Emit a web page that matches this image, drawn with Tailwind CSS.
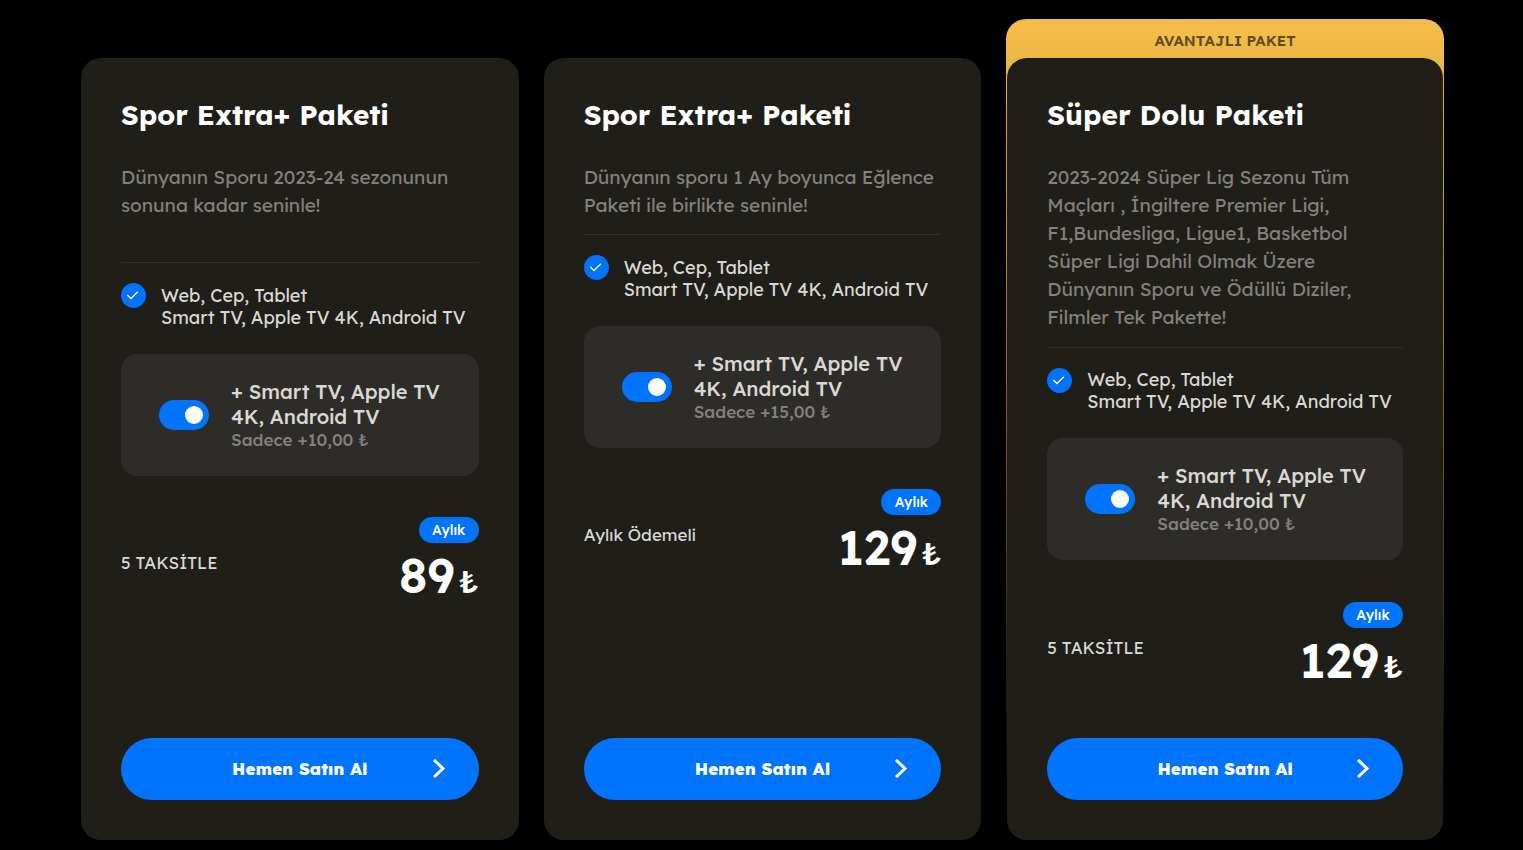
<!DOCTYPE html>
<html lang="tr">
<head>
<meta charset="utf-8">
<meta name="viewport" content="width=device-width, initial-scale=1">
<title>Paketler</title>
<script src="https://cdn.jsdelivr.net/npm/@tailwindcss/browser@4"></script>
</head>
<body class="bg-black font-['Lexend','Inter',sans-serif] text-[#dad8d5]">
<main class="grid min-h-screen grid-cols-3 gap-[25px] pt-[19px] pr-[79px] pb-[10px] pl-[81px]">

  <article class="mt-[39px] flex flex-col rounded-[20px] bg-[#1f1e19] p-10">
    <h2 class="text-[28px] leading-[34px] font-bold text-white">Spor Extra+ Paketi</h2>
    <p class="mt-[31px] text-[19px] leading-7 font-[450] text-[#84807d]">Dünyanın Sporu 2023-24 sezonunun<br>sonuna kadar seninle!<br>&nbsp;</p>
    <hr class="mt-[15px] border-[#302f2b]">
    <div class="mt-5 flex gap-[15px]">
      <span class="flex size-[25px] shrink-0 items-center justify-center rounded-full bg-[#0073ff]">
        <svg class="size-[25px]" viewBox="0 0 25 25" fill="none" stroke="#fff" stroke-width="1.3"><path d="M6.3 12 10 15.5 16.8 8.7"/></svg>
      </span>
      <p class="pt-0.5 text-[18px] leading-[22px] font-[450] whitespace-nowrap">Web, Cep, Tablet<br>Smart TV, Apple TV 4K, Android TV</p>
    </div>
    <div class="mt-[25px] flex items-center gap-[22px] rounded-[16px] bg-[#2d2c28] py-[25px] pr-4 pl-[38px]">
      <input id="tv1" type="checkbox" checked class="flex h-[30px] w-[50px] shrink-0 appearance-none items-center rounded-full bg-[#54524d] px-1.5 before:size-[18px] before:rounded-full before:bg-white checked:justify-end checked:bg-[#0073ff]">
      <label for="tv1" class="whitespace-nowrap"><span class="block text-[20px] leading-[25px] font-medium">+ Smart TV, Apple TV<br>4K, Android TV</span><span class="block text-[17px] leading-[22px] font-medium text-[#84807d]">Sadece +10,00 ₺</span></label>
    </div>
    <div class="mt-[41px] flex items-center justify-between">
      <span class="text-[17px] leading-[22px] font-[450]">5 TAKSİTLE</span>
      <div class="flex flex-col items-end text-white">
        <span class="flex h-[26px] w-[60px] items-center justify-center rounded-full bg-[#0073ff] text-[14px] leading-5 font-medium">Aylık</span>
        <span class="text-[48px] leading-[65px] font-semibold">89<span class="ml-1 text-[32px] leading-none">₺</span></span>
      </div>
    </div>
    <button type="button" class="mt-auto grid h-[62px] grid-cols-[1fr_auto_1fr] items-center rounded-full bg-[#0073ff] px-[33px] text-[17px] font-extrabold text-white">
      <span class="col-start-2 whitespace-nowrap">Hemen Satın Al</span>
      <svg class="h-5 w-3.5 justify-self-end" viewBox="0 0 14 20" fill="none" stroke="#fff" stroke-width="3"><path d="M2 1 11 9.5 2 18"/></svg>
    </button>
  </article>

  <article class="mt-[39px] flex flex-col rounded-[20px] bg-[#1f1e19] p-10">
    <h2 class="text-[28px] leading-[34px] font-bold text-white">Spor Extra+ Paketi</h2>
    <p class="mt-[31px] text-[19px] leading-7 font-[450] whitespace-nowrap text-[#84807d]">Dünyanın sporu 1 Ay boyunca Eğlence<br>Paketi ile birlikte seninle!</p>
    <hr class="mt-[15px] border-[#302f2b]">
    <div class="mt-5 flex gap-[15px]">
      <span class="flex size-[25px] shrink-0 items-center justify-center rounded-full bg-[#0073ff]">
        <svg class="size-[25px]" viewBox="0 0 25 25" fill="none" stroke="#fff" stroke-width="1.3"><path d="M6.3 12 10 15.5 16.8 8.7"/></svg>
      </span>
      <p class="pt-0.5 text-[18px] leading-[22px] font-[450] whitespace-nowrap">Web, Cep, Tablet<br>Smart TV, Apple TV 4K, Android TV</p>
    </div>
    <div class="mt-[25px] flex items-center gap-[22px] rounded-[16px] bg-[#2d2c28] py-[25px] pr-4 pl-[38px]">
      <input id="tv2" type="checkbox" checked class="flex h-[30px] w-[50px] shrink-0 appearance-none items-center rounded-full bg-[#54524d] px-1.5 before:size-[18px] before:rounded-full before:bg-white checked:justify-end checked:bg-[#0073ff]">
      <label for="tv2" class="whitespace-nowrap"><span class="block text-[20px] leading-[25px] font-medium">+ Smart TV, Apple TV<br>4K, Android TV</span><span class="block text-[17px] leading-[22px] font-medium text-[#84807d]">Sadece +15,00 ₺</span></label>
    </div>
    <div class="mt-[41px] flex items-center justify-between">
      <span class="text-[17px] leading-[22px] font-[450]">Aylık Ödemeli</span>
      <div class="flex flex-col items-end text-white">
        <span class="flex h-[26px] w-[60px] items-center justify-center rounded-full bg-[#0073ff] text-[14px] leading-5 font-medium">Aylık</span>
        <span class="text-[48px] leading-[65px] font-semibold">129<span class="ml-1 text-[32px] leading-none">₺</span></span>
      </div>
    </div>
    <button type="button" class="mt-auto grid h-[62px] grid-cols-[1fr_auto_1fr] items-center rounded-full bg-[#0073ff] px-[33px] text-[17px] font-extrabold text-white">
      <span class="col-start-2 whitespace-nowrap">Hemen Satın Al</span>
      <svg class="h-5 w-3.5 justify-self-end" viewBox="0 0 14 20" fill="none" stroke="#fff" stroke-width="3"><path d="M2 1 11 9.5 2 18"/></svg>
    </button>
  </article>

  <div class="flex flex-col rounded-[20px] bg-linear-to-b from-[#f4bd48] from-2% to-transparent to-95% px-px">
    <p class="pt-[11px] pb-[6px] text-center text-[15px] leading-[22px] font-semibold text-[#5f4c20]">AVANTAJLI PAKET</p>
    <article class="flex grow flex-col rounded-[20px] bg-[#1f1e19] p-10">
      <h2 class="text-[28px] leading-[34px] font-bold text-white">Süper Dolu Paketi</h2>
      <p class="mt-[31px] text-[19px] leading-7 font-[450] whitespace-nowrap text-[#84807d]">2023-2024 Süper Lig Sezonu Tüm<br>Maçları , İngiltere Premier Ligi,<br>F1,Bundesliga, Ligue1, Basketbol<br>Süper Ligi Dahil Olmak Üzere<br>Dünyanın Sporu ve Ödüllü Diziler,<br>Filmler Tek Pakette!</p>
      <hr class="mt-4 border-[#302f2b]">
      <div class="mt-5 flex gap-[15px]">
        <span class="flex size-[25px] shrink-0 items-center justify-center rounded-full bg-[#0073ff]">
          <svg class="size-[25px]" viewBox="0 0 25 25" fill="none" stroke="#fff" stroke-width="1.3"><path d="M6.3 12 10 15.5 16.8 8.7"/></svg>
        </span>
        <p class="pt-px text-[18px] leading-[22px] font-[450] whitespace-nowrap">Web, Cep, Tablet<br>Smart TV, Apple TV 4K, Android TV</p>
      </div>
      <div class="mt-[25px] flex items-center gap-[22px] rounded-[16px] bg-[#2d2c28] py-[25px] pr-4 pl-[38px]">
        <input id="tv3" type="checkbox" checked class="flex h-[30px] w-[50px] shrink-0 appearance-none items-center rounded-full bg-[#54524d] px-1.5 before:size-[18px] before:rounded-full before:bg-white checked:justify-end checked:bg-[#0073ff]">
        <label for="tv3" class="whitespace-nowrap"><span class="block text-[20px] leading-[25px] font-medium">+ Smart TV, Apple TV<br>4K, Android TV</span><span class="block text-[17px] leading-[22px] font-medium text-[#84807d]">Sadece +10,00 ₺</span></label>
      </div>
      <div class="mt-[42px] flex items-center justify-between">
        <span class="text-[17px] leading-[22px] font-[450]">5 TAKSİTLE</span>
        <div class="flex flex-col items-end text-white">
          <span class="flex h-[26px] w-[60px] items-center justify-center rounded-full bg-[#0073ff] text-[14px] leading-5 font-medium">Aylık</span>
          <span class="text-[48px] leading-[65px] font-semibold">129<span class="ml-1 text-[32px] leading-none">₺</span></span>
        </div>
      </div>
      <button type="button" class="mt-auto grid h-[62px] grid-cols-[1fr_auto_1fr] items-center rounded-full bg-[#0073ff] px-[33px] text-[17px] font-extrabold text-white">
        <span class="col-start-2 whitespace-nowrap">Hemen Satın Al</span>
        <svg class="h-5 w-3.5 justify-self-end" viewBox="0 0 14 20" fill="none" stroke="#fff" stroke-width="3"><path d="M2 1 11 9.5 2 18"/></svg>
      </button>
    </article>
  </div>

</main>
</body>
</html>
